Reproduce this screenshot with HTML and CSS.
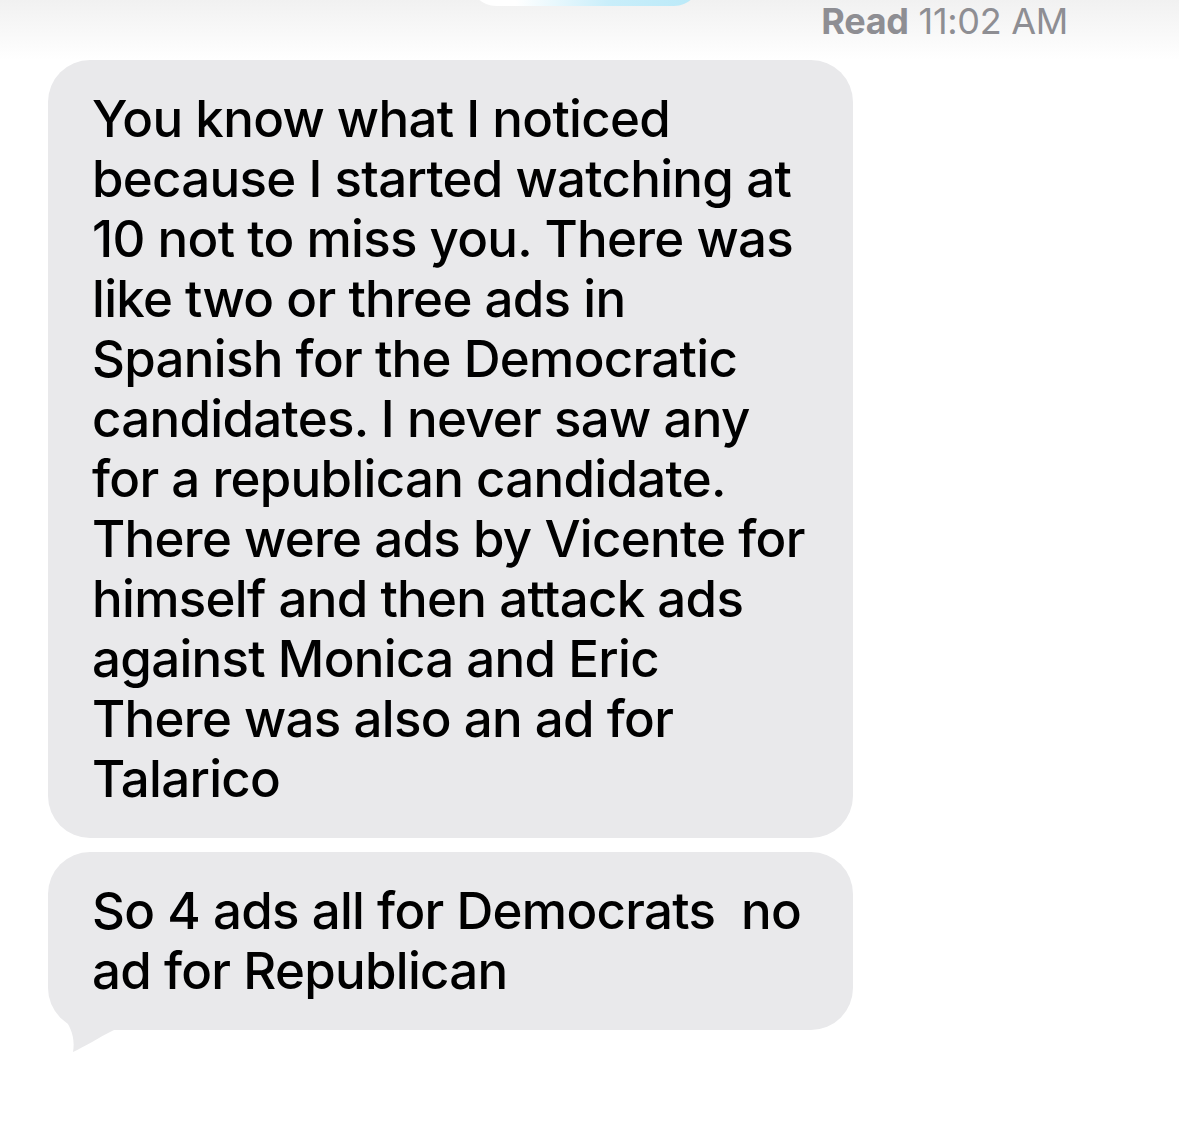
FILE: index.html
```html
<!DOCTYPE html>
<html lang="en">
<head>
    <meta charset="UTF-8">
    <title>Messages</title>
    <link rel="stylesheet" href="styles.css">
</head>
<body>
<div class="thread">
    <!-- 上一条消息的底部 + 已读 -->
    <div class="receipt-row">
        <div class="prev-bubble"></div>
        <div class="receipt"><b>Read</b> 11:02 AM</div>
    </div>

    <div class="bubble">
        <p>
            You know what I noticed<br>
            because I started watching at<br>
            10 not to miss you. There was<br>
            like two or three ads in<br>
            Spanish for the Democratic<br>
            candidates. I never saw any<br>
            for a republican candidate.<br>
            There were ads by Vicente for<br>
            himself and then attack ads<br>
            against Monica and Eric<br>
            There was also an ad for<br>
            Talarico
        </p>
    </div>

    <div class="bubble last">
        <p>
            So 4 ads all for Democrats&nbsp; no<br>
            ad for Republican
        </p>
        <svg class="tail" width="70" height="58" viewBox="0 0 70 58">
            <path d="M10 14 C20 26 28 38 25 56 C36 51 50 42 66 34 L66 14 Z" fill="#e9e9eb"/>
        </svg>
    </div>
</div>
</body>
</html>
```

FILE: styles.css
```css
* {
    margin: 0;
    padding: 0;
}

body {
    background-color: #fff;
    font-family: Inter, "Liberation Sans", sans-serif;
}

.thread {
    width: 1179px;
    height: 1142px;
    overflow: hidden;
}

/*已读回执行*/
.receipt-row {
    position: relative;
    height: 60px;
    background: linear-gradient(to bottom, #f1f1f1 0%, #f8f8f8 50%, #fff 100%);
    display: flex;
    justify-content: flex-end;
}

.prev-bubble {
    position: absolute;
    left: 470px;
    top: -20px;
    width: 230px;
    height: 26px;
    border-radius: 0 0 30px 30px;
    background: linear-gradient(to right, #fff 20%, #c9eefa 60%, #b9e9f8 100%);
}

.receipt {
    padding: 0 111px 0 0;
    font-size: 36px;
    line-height: 42px;
    color: #8e8e93;
    letter-spacing: -0.3px;
}

.receipt b {
    font-weight: 700;
}

/*灰色气泡*/
.bubble {
    position: relative;
    width: 805px;
    box-sizing: border-box;
    margin: 0 0 14px 48px;
    padding: 29px 44px;
    background-color: #e9e9eb;
    border-radius: 42px;
}

.bubble p {
    font-size: 51px;
    font-weight: 500;
    line-height: 60px;
    color: #000;
    white-space: nowrap;
    letter-spacing: -0.7px;
}

.tail {
    position: absolute;
    left: 0;
    bottom: -24px;
}
```
